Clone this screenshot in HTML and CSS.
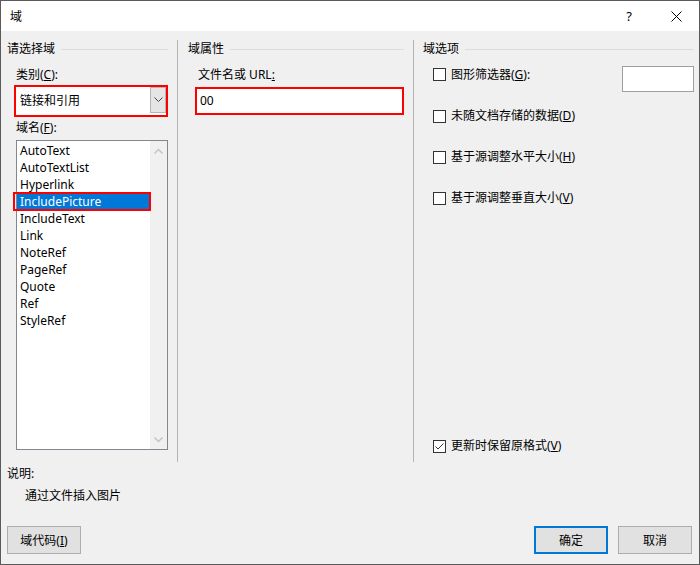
FILE: index.html
```html
<!DOCTYPE html>
<html lang="zh-CN">
<head>
  <meta charset="UTF-8" />
  <title>域</title>
  <link rel="stylesheet" href="styles.css">
</head>
<body>
  <div class="window">
    <div class="titlebar">
      <span class="title">域</span>
      <span class="help">?</span>
      <svg class="close" width="11" height="11" viewBox="0 0 11 11"><path d="M0.5 0.5 L10.5 10.5 M10.5 0.5 L0.5 10.5" stroke="#000" stroke-width="1" fill="none"/></svg>
    </div>

    <div class="panes">
      <div class="pane pane-left">
        <div class="legend">请选择域</div>
        <div class="label first">类别(<u>C</u>):</div>
        <div class="select">
          <span class="select-text">链接和引用</span>
          <span class="select-btn">
            <svg width="9" height="6" viewBox="0 0 9 6"><path d="M0.5 0.5 L4.5 4.5 L8.5 0.5" stroke="#444" stroke-width="1" fill="none"/></svg>
          </span>
        </div>
        <div class="label second">域名(<u>F</u>):</div>
        <div class="listbox">
          <div class="items">
            <div class="item">AutoText</div>
            <div class="item">AutoTextList</div>
            <div class="item">Hyperlink</div>
            <div class="item selected">IncludePicture</div>
            <div class="item">IncludeText</div>
            <div class="item">Link</div>
            <div class="item">NoteRef</div>
            <div class="item">PageRef</div>
            <div class="item">Quote</div>
            <div class="item">Ref</div>
            <div class="item">StyleRef</div>
          </div>
          <div class="scrollbar">
            <svg width="9" height="6" viewBox="0 0 9 6"><path d="M0.5 5.5 L4.5 1.5 L8.5 5.5" stroke="#c2c2c2" stroke-width="1.4" fill="none"/></svg>
            <svg width="9" height="6" viewBox="0 0 9 6"><path d="M0.5 0.5 L4.5 4.5 L8.5 0.5" stroke="#c2c2c2" stroke-width="1.4" fill="none"/></svg>
          </div>
        </div>
      </div>

      <div class="pane pane-mid">
        <div class="legend">域属性</div>
        <div class="label first">文件名或 URL<u>:</u></div>
        <div class="textbox">00</div>
      </div>

      <div class="pane pane-right">
        <div class="legend">域选项</div>
        <div class="option first">
          <span class="check"></span>
          <span>图形筛选器(<u>G</u>):</span>
          <span class="small-input"></span>
        </div>
        <div class="option">
          <span class="check"></span>
          <span>未随文档存储的数据(<u>D</u>)</span>
        </div>
        <div class="option">
          <span class="check"></span>
          <span>基于源调整水平大小(<u>H</u>)</span>
        </div>
        <div class="option">
          <span class="check"></span>
          <span>基于源调整垂直大小(<u>V</u>)</span>
        </div>
        <div class="option last">
          <span class="check">
            <svg width="11" height="11" viewBox="0 0 11 11"><path d="M1.5 5.5 L4 8 L9.5 2.5" stroke="#333" stroke-width="1" fill="none"/></svg>
          </span>
          <span>更新时保留原格式(<u>V</u>)</span>
        </div>
      </div>
    </div>

    <div class="desc">
      <div class="desc-label">说明:</div>
      <div class="desc-text">通过文件插入图片</div>
    </div>

    <div class="footer">
      <button class="btn">域代码(<u>I</u>)</button>
      <span class="spacer"></span>
      <button class="btn default">确定</button>
      <button class="btn">取消</button>
    </div>
  </div>
</body>
</html>
```

FILE: styles.css
```css
* { box-sizing: border-box; }
body { margin: 0; font-family: "Noto Sans", "Noto Sans CJK SC", sans-serif; font-size: 12px; color: #000; }
u { text-decoration: underline; text-underline-offset: 1px; }

.window { width: 700px; height: 565px; border: 1px solid #5a5a5a; background: #f0f0f0; display: flex; flex-direction: column; }

.titlebar { height: 30px; flex: none; background: #fff; display: flex; align-items: center; padding-left: 9px; }
.title { flex: 1; font-size: 12px; }
.help { font-size: 13px; margin-right: 39px; }
.close { margin-right: 17px; }

.panes { display: grid; grid-template-columns: 177px 236px 1fr; height: 422px; margin-top: 9px; flex: none; }
.pane { display: flex; flex-direction: column; }
.pane-left { padding: 0 9px 0 6px; border-right: 1px solid #b4b4b4; }
.pane-mid { padding: 0 9px 0 10px; border-right: 1px solid #b4b4b4; }
.pane-right { padding: 0 5px 8px 9px; }

.legend { height: 18px; line-height: 18px; display: flex; align-items: center; gap: 6px; }
.legend::after { content: ""; flex: 1; height: 1px; background: #dcdcdc; }

.label { line-height: 16px; }
.label.first { margin-top: 9px; padding-left: 9px; }
.label.second { margin-top: 3px; padding-left: 9px; }
.pane-mid .label.first { padding-left: 10px; }

.select { margin-top: 2px; margin-left: 7px; height: 32px; border: 2px solid #f00; background: #fff; display: flex; align-items: stretch; }
.select-text { flex: 1; padding-left: 4px; line-height: 28px; }
.select-btn { width: 16px; background: #e5e5e5; border: 1px solid #b4b4b4; display: flex; align-items: center; justify-content: center; margin-bottom: 2px; }

.listbox { margin-top: 4px; margin-left: 9px; height: 310px; border: 1px solid #828790; background: #fff; display: flex; }
.items { flex: 1; padding-top: 1px; }
.item { height: 17px; line-height: 17px; padding-left: 3px; white-space: nowrap; }
.item.selected { background: #0078d7; color: #fff; position: relative; }
.item.selected::after { content: ""; position: absolute; left: -4px; right: -1px; top: -1px; bottom: -1px; border: 2px solid #f00; }
.scrollbar { width: 17px; background: #f0f0f0; display: flex; flex-direction: column; justify-content: space-between; align-items: center; padding: 7px 0 6px; }

.textbox { margin-top: 4px; margin-left: 7px; height: 28px; border: 2px solid #f00; background: #fff; padding-left: 3px; line-height: 24px; }

.option { display: flex; align-items: center; height: 16px; line-height: 16px; padding-left: 10px; margin-top: 25px; }
.option.first { margin-top: 9px; align-items: flex-start; }
.option.last { margin-top: auto; }
.check { width: 13px; height: 13px; border: 1px solid #333; background: #fff; margin-right: 5px; flex: none; display: flex; align-items: center; justify-content: center; }
.option.first .check { margin-top: 1px; }
.small-input { margin-left: auto; margin-top: -1px; width: 72px; height: 26px; border: 1px solid #a0a0a0; background: #fff; flex: none; }

.desc { padding-left: 6px; margin-top: 4px; }
.desc-label { line-height: 16px; }
.desc-text { line-height: 16px; margin-top: 6px; padding-left: 18px; }

.footer { margin-top: auto; display: flex; padding: 0 7px 10px 6px; gap: 10px; }
.spacer { flex: 1; }
.btn { width: 74px; height: 28px; border: 1px solid #adadad; background: #e1e1e1; font-family: inherit; font-size: 12px; color: #000; padding: 0; }
.btn.default { border: 2px solid #0078d7; }
```
